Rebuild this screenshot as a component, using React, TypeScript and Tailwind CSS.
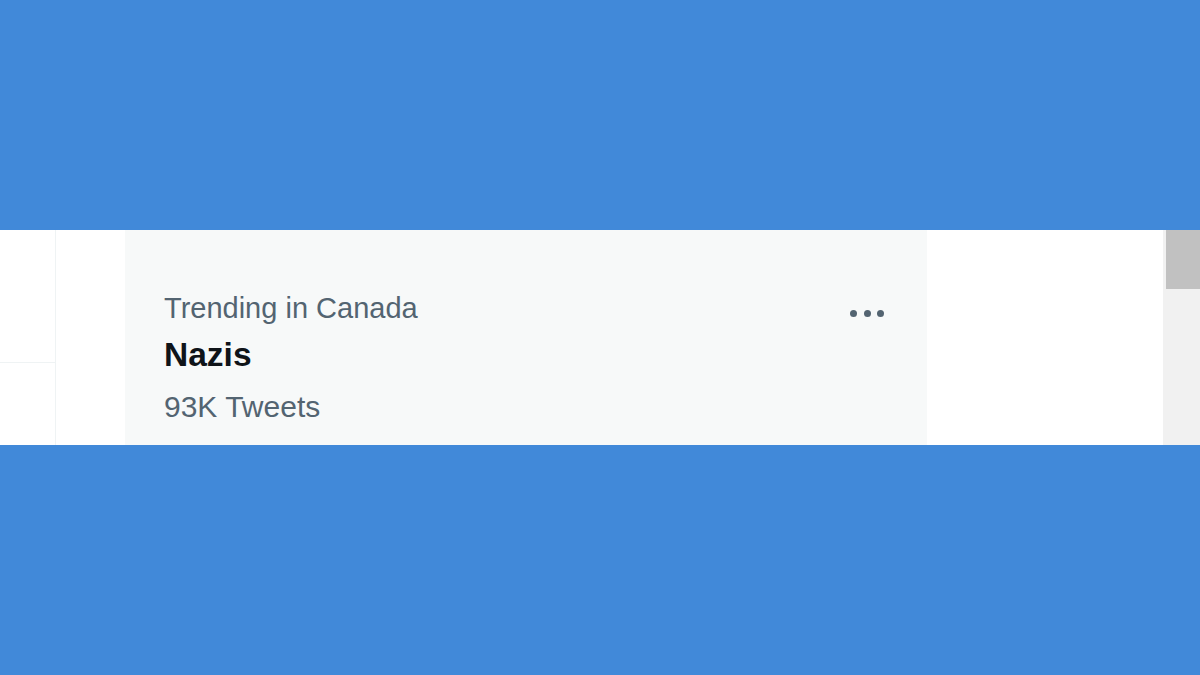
export default function App() {
  return (
    <div className="flex h-[675px] w-[1200px] flex-col bg-[#4189d9] font-['Liberation_Sans',Arial,sans-serif]">
      <div className="h-[230px]" />
      <div className="flex h-[215px] bg-white">
        {/* left column stub */}
        <div className="flex w-[56px] flex-col border-r border-[#eff3f4]">
          <div className="h-[133px] border-b border-[#eff3f4]" />
          <div className="flex-1" />
        </div>
        <div className="w-[69px]" />

        {/* trend card */}
        <div className="flex w-[802px] items-start justify-between bg-[#f7f9f9] pl-[39px] pr-[43px] pt-[60px]">
          <div className="flex flex-col">
            <span className="h-[37px] text-[29px] leading-[37px] text-[#536471]">Trending in Canada</span>
            <span className="mt-[8px] h-[40px] text-[33.5px] font-bold leading-[40px] text-[#0f1419]">Nazis</span>
            <span className="mt-[13px] h-[37px] text-[30px] leading-[37px] text-[#536471]">93K Tweets</span>
          </div>
          <div className="mt-[20px] flex gap-[6.5px]">
            <span className="h-[7px] w-[7px] rounded-full bg-[#536471]" />
            <span className="h-[7px] w-[7px] rounded-full bg-[#536471]" />
            <span className="h-[7px] w-[7px] rounded-full bg-[#536471]" />
          </div>
        </div>

        <div className="flex-1" />

        {/* scrollbar */}
        <div className="w-[37px] bg-[#f1f1f1] pl-[3px]">
          <div className="h-[59px] w-[34px] bg-[#c1c1c1]" />
        </div>
      </div>
      <div className="flex-1" />
    </div>
  );
}
